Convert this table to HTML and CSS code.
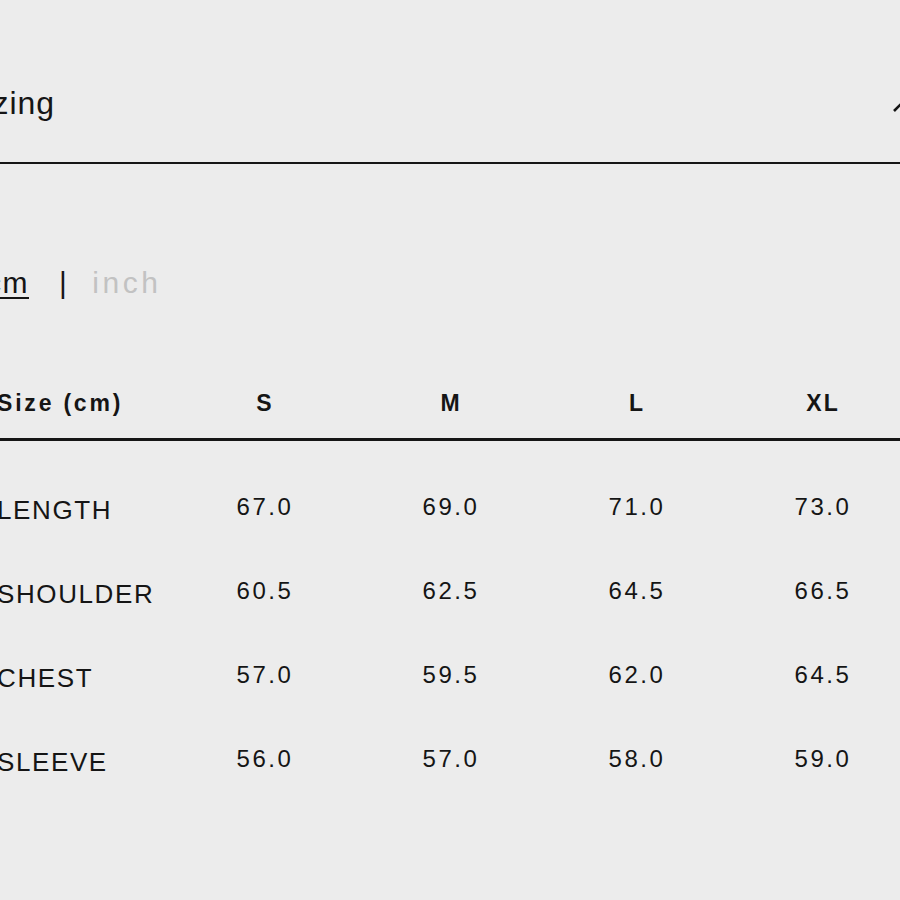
FILE: index.html
```html
<!DOCTYPE html>
<html lang="en">
<head>
<meta charset="utf-8">
<title>Sizing</title>
<link rel="stylesheet" href="styles.css">
</head>
<body>
<div class="page">
  <div class="head">
    <h2 class="title">Sizing</h2>
    <svg class="chev" width="22" height="14" viewBox="0 0 22 14" aria-hidden="true">
      <polyline points="1,12 11,2 21,12" fill="none" stroke="#151515" stroke-width="2.6"/>
    </svg>
  </div>
  <div class="units">
    <span class="unit active">cm</span>
    <span class="sep">|</span>
    <span class="unit off">inch</span>
  </div>
  <div class="table">
    <div class="row hrow">
      <div class="label hlabel">Size (cm)</div>
      <div class="cell hcell">S</div>
      <div class="cell hcell">M</div>
      <div class="cell hcell">L</div>
      <div class="cell hcell">XL</div>
    </div>
    <div class="body">
      <div class="row">
        <div class="label">LENGTH</div>
        <div class="cell">67.0</div>
        <div class="cell">69.0</div>
        <div class="cell">71.0</div>
        <div class="cell">73.0</div>
      </div>
      <div class="row">
        <div class="label">SHOULDER</div>
        <div class="cell">60.5</div>
        <div class="cell">62.5</div>
        <div class="cell">64.5</div>
        <div class="cell">66.5</div>
      </div>
      <div class="row">
        <div class="label">CHEST</div>
        <div class="cell">57.0</div>
        <div class="cell">59.5</div>
        <div class="cell">62.0</div>
        <div class="cell">64.5</div>
      </div>
      <div class="row">
        <div class="label">SLEEVE</div>
        <div class="cell">56.0</div>
        <div class="cell">57.0</div>
        <div class="cell">58.0</div>
        <div class="cell">59.0</div>
      </div>
    </div>
  </div>
</div>
</body>
</html>
```

FILE: styles.css
```css
html, body {
  margin: 0;
  padding: 0;
  background: #ececec;
}
body {
  width: 900px;
  height: 900px;
  overflow: hidden;
  font-family: "Liberation Sans", Arial, sans-serif;
  color: #151515;
}
.page {
  margin-left: -35px;
  width: 980px;
}
.head {
  height: 164px;
  box-sizing: border-box;
  padding-top: 44px;
  border-bottom: 2px solid #151515;
  display: flex;
  align-items: center;
  justify-content: space-between;
  padding-right: 30px;
}
.title {
  margin: 0;
  margin-left: -3px;
  font-size: 32px;
  font-weight: normal;
  letter-spacing: 1px;
  line-height: 40px;
}
.chev {
  display: block;
  margin-top: 6px;
}
.units {
  margin-top: 99px;
  padding-left: 21px;
  height: 40px;
  display: flex;
  align-items: center;
  font-size: 30px;
  line-height: 40px;
  letter-spacing: 1.5px;
}
.unit.active {
  text-decoration: underline;
  text-decoration-thickness: 2px;
  text-underline-offset: 4px;
}
.sep {
  margin-left: 30px;
  margin-right: 24px;
  font-size: 30px;
}
.unit.off {
  color: #c2c2c2;
  letter-spacing: 3.5px;
}
.table {
  margin-top: 65px;
  padding-left: 32px;
}
.row {
  display: grid;
  grid-template-columns: 175px repeat(4, 186px);
  align-items: center;
  height: 84px;
}
.hrow {
  height: 70px;
  border-bottom: 3px solid #151515;
}
.body {
  padding-top: 24px;
}
.label {
  font-size: 26px;
  letter-spacing: 1.6px;
  padding-top: 6px;
}
.hlabel {
  padding-top: 0;
  font-size: 23px;
  font-weight: bold;
  letter-spacing: 2.8px;
}
.cell {
  text-align: center;
  font-size: 24px;
  letter-spacing: 2.6px;
}
.hcell {
  font-size: 23px;
  font-weight: bold;
  letter-spacing: 2px;
}
```
